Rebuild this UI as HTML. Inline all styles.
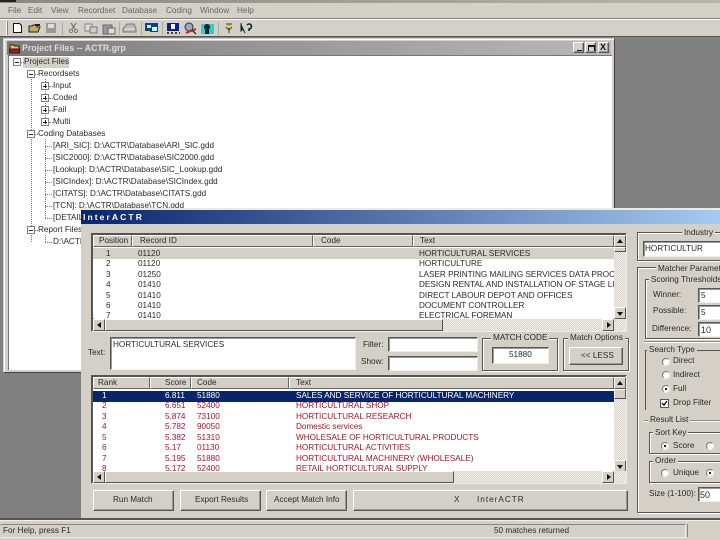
<!DOCTYPE html>
<html><head><meta charset="utf-8"><style>
html,body{margin:0;padding:0;background:#808080}
#p{position:relative;width:720px;height:540px;overflow:hidden;background:#808080;font-family:"Liberation Sans",sans-serif;font-size:8.2px;color:#2a2a2a}
#p div,#p span,#p svg{position:absolute;box-sizing:border-box}
.t{white-space:nowrap;line-height:10px;height:10px;filter:blur(.35px)}
.m{color:#666;font-size:8.2px}
.r{background:#d4d0c8;border:1px solid;border-color:#fff #555 #555 #fff;box-shadow:inset -1px -1px 0 #999}
.s{background:#fff;border:1px solid;border-color:#555 #eee #eee #555;box-shadow:inset 1px 1px 0 #999}
.g{border:1px solid #555;box-shadow:1px 1px 0 #fff,inset 1px 1px 0 #fff}
.l{background:#d4d0c8;white-space:nowrap;line-height:10px;height:10px;padding:0 2px;filter:blur(.35px)}
.h{background:#d4d0c8;border:1px solid;border-color:#fff #666 #666 #fff;height:12px}
.b{background:#d4d0c8;border:1px solid;border-color:#fff #555 #555 #fff;width:12px;height:12px}
.d{background:repeating-conic-gradient(#d4d0c8 0 25%,#f4f3ef 0 50%) 0 0/2px 2px}
.rd{width:8px;height:8px;border-radius:50%;background:#fff;border:1px solid;border-color:#777 #eee #eee #777}
.on:after{content:"";position:absolute;left:2px;top:2px;width:2px;height:2px;background:#222}
.red{color:#a31525}
.bx{width:8px;height:8px;background:#fff;border:1px solid #808080;font-size:0}
.bx:before{content:"";position:absolute;left:1px;right:1px;top:2.5px;height:1px;background:#222}
.pl:after{content:"";position:absolute;top:1px;bottom:1px;left:2.5px;width:1px;background:#222}
.v{border-left:1px dotted #777;width:1px}
.o{border-top:1px dotted #777;height:1px}
</style></head><body><div id="p">

<!-- app chrome -->
<div style="left:0;top:0;width:720px;height:3px;background:linear-gradient(90deg,#8a8a85,#b5b5b0)"></div>
<div style="left:0;top:0;width:16px;height:2px;background:#222"></div>
<div style="left:0;top:3px;width:720px;height:34px;background:#d4d0c8"></div>
<div style="left:0;top:18px;width:720px;height:1px;background:#808080"></div>
<div style="left:0;top:19px;width:720px;height:1px;background:#fff"></div>
<div style="left:0;top:36px;width:720px;height:1px;background:#555"></div>
<span class="t m" style="left:8px;top:6px">File</span>
<span class="t m" style="left:28px;top:6px">Edit</span>
<span class="t m" style="left:51px;top:6px">View</span>
<span class="t m" style="left:78px;top:6px">Recordset</span>
<span class="t m" style="left:122px;top:6px">Database</span>
<span class="t m" style="left:166px;top:6px">Coding</span>
<span class="t m" style="left:200px;top:6px">Window</span>
<span class="t m" style="left:237px;top:6px">Help</span>
<div style="left:6px;top:21px;width:2px;height:14px;border-left:1px solid #fff;border-right:1px solid #808080"></div>

<!-- toolbar icons -->
<svg style="left:0;top:19px" width="260" height="18" viewBox="0 19 260 18">
<path d="M13.5 23.5h6l2 2v7h-8z" fill="#fff" stroke="#111"/>
<path d="M29 32v-6h3l1-1h4v2h3l-2 5z" fill="#b8b060" stroke="#222"/><path d="M35 24h5v2h-5z" fill="#222"/>
<rect x="46" y="23" width="10" height="10" fill="#999"/><rect x="48" y="24" width="6" height="4" fill="#ddd"/>
<path d="M62.5 22v13M119.5 22v13M141.5 22v13M162.5 22v13M218.5 22v13" stroke="#aaa"/>
<path d="M71 23l4 6M76 23l-4 6" stroke="#777" stroke-width="1.2"/><circle cx="71" cy="31" r="1.6" fill="none" stroke="#777"/><circle cx="76" cy="31" r="1.6" fill="none" stroke="#777"/>
<rect x="85" y="24" width="7" height="7" fill="#ddd" stroke="#888"/><rect x="90" y="27" width="7" height="6" fill="#ccc" stroke="#777"/>
<rect x="103" y="25" width="9" height="9" fill="#999" stroke="#666"/><rect x="108" y="28" width="7" height="6" fill="#ddd" stroke="#666"/>
<path d="M123 29l4-5h7l2 4v4h-13z" fill="#bbb" stroke="#777"/><path d="M125 29h9" stroke="#eee"/>
<rect x="145" y="23" width="13" height="9" fill="#123a9a"/><rect x="147" y="25" width="4" height="3" fill="#9fd"/><rect x="152" y="27" width="5" height="4" fill="#cff"/><rect x="145" y="31" width="5" height="3" fill="#dd8"/>
<rect x="167" y="23" width="12" height="8" fill="#10208a"/><rect x="171" y="24" width="4" height="5" fill="#fff"/><path d="M167 33h2M171 33h2M175 33h2M179 33h1" stroke="#111" stroke-width="1.5"/>
<circle cx="189" cy="27" r="4" fill="#9ab" stroke="#234"/><path d="M186 33l10-4" stroke="#c22" stroke-width="2"/><path d="M192 30l4 4" stroke="#333" stroke-width="1.5"/>
<rect x="201" y="24" width="13" height="10" fill="#3cc"/><circle cx="207" cy="27" r="3" fill="#123"/><rect x="205" y="29" width="4" height="5" fill="#123"/>
<path d="M226 24h6M229 24v9M226 27l3 3 3-3" fill="none" stroke="#555" stroke-width="1.3"/><path d="M227 25h4v3h-4z" fill="#dc4"/>
<path d="M241 23v8l2-2 2 4" fill="#123" stroke="#123"/><path d="M247 25a2.5 2.5 0 1 1 2 4v2" fill="none" stroke="#123" stroke-width="1.6"/>
</svg>

<!-- MDI left edge -->
<div style="left:0;top:37px;width:3px;height:483px;background:#808080"></div>

<!-- Project window -->
<div style="left:3px;top:38px;width:612px;height:335px;background:#d4d0c8;border:1px solid;border-color:#d4d0c8 #444 #444 #d4d0c8;box-shadow:inset 1px 1px 0 #fff"></div>
<div style="left:7px;top:41px;width:604px;height:14px;background:linear-gradient(90deg,#7d7d7d,#b8b8b8)"></div>
<svg style="left:9px;top:42px" width="12" height="12"><path d="M1 3h4l1 1h4v4H1z" fill="#dfc25a" stroke="#222"/><rect x="0.5" y="7" width="10" height="4" fill="#b01818" stroke="#222"/></svg>
<span class="t" style="left:22px;top:43px;color:#dcdcdc;font-weight:bold;font-size:8.8px">Project Files -- ACTR.grp</span>
<div class="r" style="left:573px;top:42px;width:11px;height:11px"><div style="left:3px;top:7px;width:5px;height:1px;background:#111"></div></div>
<div class="r" style="left:585px;top:42px;width:11px;height:11px"><div style="left:2px;top:2px;width:7px;height:6px;border:1px solid #111;border-top-width:2px;border-bottom:0"></div></div>
<div class="r" style="left:598px;top:42px;width:11px;height:11px"><span style="left:1px;top:-1px;font-size:9px;line-height:10px;font-weight:bold;color:#111">X</span></div>
<div style="left:8px;top:55px;width:604px;height:315px;background:#fff;border-top:1px solid #777;border-left:1px solid #777"></div>

<!-- tree -->
<div style="left:23px;top:57px;width:46px;height:11px;background:#d4d0c8"></div>
<div class="v" style="left:31px;top:79px;height:163px"></div>
<div class="v" style="left:45px;top:79px;height:43px"></div>
<div class="v" style="left:45px;top:139px;height:79px"></div>
<div class="v" style="left:45px;top:235px;height:7px"></div>
<div class="o" style="left:21px;top:62px;width:3px"></div>
<div class="o" style="left:35px;top:74px;width:3px"></div>
<div class="o" style="left:49px;top:86px;width:4px"></div><div class="o" style="left:49px;top:98px;width:4px"></div><div class="o" style="left:49px;top:110px;width:4px"></div><div class="o" style="left:49px;top:122px;width:4px"></div>
<div class="o" style="left:35px;top:134px;width:3px"></div><div class="o" style="left:35px;top:230px;width:3px"></div>
<div class="o" style="left:45px;top:146px;width:7px"></div><div class="o" style="left:45px;top:158px;width:7px"></div><div class="o" style="left:45px;top:170px;width:7px"></div><div class="o" style="left:45px;top:182px;width:7px"></div><div class="o" style="left:45px;top:194px;width:7px"></div><div class="o" style="left:45px;top:206px;width:7px"></div><div class="o" style="left:45px;top:218px;width:7px"></div><div class="o" style="left:45px;top:242px;width:7px"></div>
<div class="bx" style="left:13px;top:58px"></div>
<div class="bx" style="left:27px;top:70px"></div>
<div class="bx pl" style="left:41px;top:82px"></div>
<div class="bx pl" style="left:41px;top:94px"></div>
<div class="bx pl" style="left:41px;top:106px"></div>
<div class="bx pl" style="left:41px;top:118px"></div>
<div class="bx" style="left:27px;top:130px"></div>
<div class="bx" style="left:27px;top:226px"></div>
<span class="t" style="left:24px;top:57px">Project Files</span>
<span class="t" style="left:38px;top:69px">Recordsets</span>
<span class="t" style="left:53px;top:81px">Input</span>
<span class="t" style="left:53px;top:93px">Coded</span>
<span class="t" style="left:53px;top:105px">Fail</span>
<span class="t" style="left:53px;top:117px">Multi</span>
<span class="t" style="left:38px;top:129px">Coding Databases</span>
<span class="t" style="left:53px;top:141px">[ARI_SIC]:  D:\ACTR\Database\ARI_SIC.gdd</span>
<span class="t" style="left:53px;top:153px">[SIC2000]:  D:\ACTR\Database\SIC2000.gdd</span>
<span class="t" style="left:53px;top:165px">[Lookup]:  D:\ACTR\Database\SIC_Lookup.gdd</span>
<span class="t" style="left:53px;top:177px">[SICIndex]:  D:\ACTR\Database\SICIndex.gdd</span>
<span class="t" style="left:53px;top:189px">[CITATS]:  D:\ACTR\Database\CITATS.gdd</span>
<span class="t" style="left:53px;top:201px">[TCN]:  D:\ACTR\Database\TCN.gdd</span>
<span class="t" style="left:53px;top:213px">[DETAIL]</span>
<span class="t" style="left:38px;top:225px">Report Files</span>
<span class="t" style="left:53px;top:237px">D:\ACTR</span>

<!-- InterACTR window -->
<div style="left:81px;top:208px;width:639px;height:310px;background:#d4d0c8"></div>
<div style="left:81px;top:208px;width:639px;height:2px;background:#eceae4"></div>
<div style="left:81px;top:210px;width:639px;height:14px;background:linear-gradient(90deg,#0a246a,#a6caf0)"></div>
<span class="t" style="left:83px;top:212px;color:#fff;font-weight:bold;font-size:8.5px;letter-spacing:2.1px">InterACTR</span>

<!-- top list -->
<div class="s" style="left:91px;top:233px;width:536px;height:99px;border-width:2px"></div>
<div style="left:93px;top:235px;width:521px;height:83px;background:#fff;overflow:hidden"></div>
<div class="h" style="left:93px;top:235px;width:39px"></div>
<div class="h" style="left:132px;top:235px;width:181px"></div>
<div class="h" style="left:313px;top:235px;width:100px"></div>
<div class="h" style="left:413px;top:235px;width:201px"></div>
<span class="t" style="left:99px;top:236px">Position</span>
<span class="t" style="left:140px;top:236px">Record ID</span>
<span class="t" style="left:321px;top:236px">Code</span>
<span class="t" style="left:420px;top:236px">Text</span>
<div style="left:93px;top:248px;width:521px;height:11px;background:#d4d0c8"></div>
<div style="left:93px;top:247px;width:521px;height:71px;overflow:hidden">
<span class="t" style="left:13px;top:2px">1</span><span class="t" style="left:45px;top:2px">01120</span><span class="t" style="left:326px;top:2px">HORTICULTURAL SERVICES</span>
<span class="t" style="left:13px;top:12px">2</span><span class="t" style="left:45px;top:12px">01120</span><span class="t" style="left:326px;top:12px">HORTICULTURE</span>
<span class="t" style="left:13px;top:23px">3</span><span class="t" style="left:45px;top:23px">01250</span><span class="t" style="left:326px;top:23px;width:195px;overflow:hidden">LASER PRINTING MAILING SERVICES DATA PROCESSING</span>
<span class="t" style="left:13px;top:33px">4</span><span class="t" style="left:45px;top:33px">01410</span><span class="t" style="left:326px;top:33px;width:195px;overflow:hidden">DESIGN RENTAL AND INSTALLATION OF STAGE LIGHTING</span>
<span class="t" style="left:13px;top:44px">5</span><span class="t" style="left:45px;top:44px">01410</span><span class="t" style="left:326px;top:44px">DIRECT LABOUR DEPOT AND OFFICES</span>
<span class="t" style="left:13px;top:54px">6</span><span class="t" style="left:45px;top:54px">01410</span><span class="t" style="left:326px;top:54px">DOCUMENT CONTROLLER</span>
<span class="t" style="left:13px;top:64px">7</span><span class="t" style="left:45px;top:64px">01410</span><span class="t" style="left:326px;top:64px">ELECTRICAL FOREMAN</span>
</div>
<div class="d" style="left:614px;top:235px;width:12px;height:84px"></div>
<div class="b" style="left:614px;top:235px"><span style="left:2px;top:3px;width:0;height:0;border:3px solid transparent;border-top:0;border-bottom:4px solid #111"></span></div>
<div class="b" style="left:614px;top:247px;height:5px"></div>
<div class="b" style="left:614px;top:307px"><span style="left:2px;top:4px;width:0;height:0;border:3px solid transparent;border-bottom:0;border-top:4px solid #111"></span></div>
<div class="d" style="left:93px;top:319px;width:533px;height:12px"></div>
<div class="b" style="left:93px;top:319px"><span style="left:3px;top:2px;width:0;height:0;border:3px solid transparent;border-left:0;border-right:4px solid #111"></span></div>
<div class="b" style="left:105px;top:319px;width:338px"></div>
<div class="b" style="left:602px;top:319px"><span style="left:4px;top:2px;width:0;height:0;border:3px solid transparent;border-right:0;border-left:4px solid #111"></span></div>

<!-- text + filter -->
<span class="t" style="left:88px;top:348px">Text:</span>
<div class="s" style="left:110px;top:337px;width:246px;height:33px"></div>
<span class="t" style="left:113px;top:340px">HORTICULTURAL SERVICES</span>
<span class="t" style="left:363px;top:340px">Filter:</span>
<span class="t" style="left:361px;top:357px">Show:</span>
<div class="s" style="left:388px;top:337px;width:90px;height:15px"></div>
<div class="s" style="left:388px;top:356px;width:90px;height:15px"></div>

<div class="g" style="left:482px;top:338px;width:76px;height:33px"></div>
<span class="l" style="left:491px;top:333px">MATCH CODE</span>
<div class="s" style="left:492px;top:347px;width:57px;height:17px"></div>
<span class="t" style="left:509px;top:350px">51880</span>
<div class="g" style="left:563px;top:338px;width:66px;height:33px"></div>
<span class="l" style="left:568px;top:333px">Match Options</span>
<div class="r" style="left:569px;top:347px;width:54px;height:18px"></div>
<span class="t" style="left:581px;top:351px">&lt;&lt; LESS</span>

<!-- lower list -->
<div class="s" style="left:91px;top:375px;width:536px;height:109px;border-width:2px"></div>
<div style="left:93px;top:377px;width:521px;height:94px;background:#fff"></div>
<div class="h" style="left:93px;top:377px;width:57px"></div>
<div class="h" style="left:150px;top:377px;width:41px"></div>
<div class="h" style="left:191px;top:377px;width:98px"></div>
<div class="h" style="left:289px;top:377px;width:325px"></div>
<span class="t" style="left:98px;top:378px">Rank</span>
<span class="t" style="left:165px;top:378px">Score</span>
<span class="t" style="left:197px;top:378px">Code</span>
<span class="t" style="left:296px;top:378px">Text</span>
<div style="left:93px;top:391px;width:521px;height:11px;background:#0a246a"></div>
<div style="left:93px;top:389px;width:521px;height:82px;overflow:hidden" class="red">
<span class="t" style="left:9px;top:2px;color:#fff">1</span><span class="t" style="left:72px;top:2px;color:#fff">6.811</span><span class="t" style="left:104px;top:2px;color:#fff">51880</span><span class="t" style="left:203px;top:2px;color:#fff">SALES AND SERVICE OF HORTICULTURAL MACHINERY</span>
<span class="t" style="left:9px;top:12px">2</span><span class="t" style="left:72px;top:12px">6.651</span><span class="t" style="left:104px;top:12px">52400</span><span class="t" style="left:203px;top:12px">HORTICULTURAL SHOP</span>
<span class="t" style="left:9px;top:23px">3</span><span class="t" style="left:72px;top:23px">5.874</span><span class="t" style="left:104px;top:23px">73100</span><span class="t" style="left:203px;top:23px">HORTICULTURAL RESEARCH</span>
<span class="t" style="left:9px;top:33px">4</span><span class="t" style="left:72px;top:33px">5.782</span><span class="t" style="left:104px;top:33px">90050</span><span class="t" style="left:203px;top:33px">Domestic services</span>
<span class="t" style="left:9px;top:44px">5</span><span class="t" style="left:72px;top:44px">5.382</span><span class="t" style="left:104px;top:44px">51310</span><span class="t" style="left:203px;top:44px">WHOLESALE OF HORTICULTURAL PRODUCTS</span>
<span class="t" style="left:9px;top:54px">6</span><span class="t" style="left:72px;top:54px">5.17</span><span class="t" style="left:104px;top:54px">01130</span><span class="t" style="left:203px;top:54px">HORTICULTURAL ACTIVITIES</span>
<span class="t" style="left:9px;top:65px">7</span><span class="t" style="left:72px;top:65px">5.195</span><span class="t" style="left:104px;top:65px">51880</span><span class="t" style="left:203px;top:65px">HORTICULTURAL MACHINERY (WHOLESALE)</span>
<span class="t" style="left:9px;top:75px">8</span><span class="t" style="left:72px;top:75px">5.172</span><span class="t" style="left:104px;top:75px">52400</span><span class="t" style="left:203px;top:75px">RETAIL HORTICULTURAL SUPPLY</span>
</div>
<div class="d" style="left:614px;top:377px;width:12px;height:95px"></div>
<div class="b" style="left:614px;top:377px"><span style="left:2px;top:3px;width:0;height:0;border:3px solid transparent;border-top:0;border-bottom:4px solid #111"></span></div>
<div class="b" style="left:614px;top:389px;height:10px"></div>
<div class="b" style="left:614px;top:460px"><span style="left:2px;top:4px;width:0;height:0;border:3px solid transparent;border-bottom:0;border-top:4px solid #111"></span></div>
<div class="d" style="left:93px;top:471px;width:533px;height:12px"></div>
<div class="b" style="left:93px;top:471px"><span style="left:3px;top:2px;width:0;height:0;border:3px solid transparent;border-left:0;border-right:4px solid #111"></span></div>
<div class="b" style="left:105px;top:471px;width:349px"></div>
<div class="b" style="left:602px;top:471px"><span style="left:4px;top:2px;width:0;height:0;border:3px solid transparent;border-right:0;border-left:4px solid #111"></span></div>

<!-- buttons -->
<div class="r" style="left:93px;top:490px;width:81px;height:21px"></div>
<div class="r" style="left:180px;top:490px;width:81px;height:21px"></div>
<div class="r" style="left:266px;top:490px;width:81px;height:21px"></div>
<div class="r" style="left:353px;top:490px;width:275px;height:21px"></div>
<span class="t" style="left:113px;top:495px">Run Match</span>
<span class="t" style="left:195px;top:495px">Export Results</span>
<span class="t" style="left:274px;top:495px">Accept Match Info</span>
<span class="t" style="left:454px;top:495px">X</span>
<span class="t" style="left:477px;top:495px;letter-spacing:1px">InterACTR</span>

<!-- right panel -->
<div class="g" style="left:637px;top:232px;width:90px;height:29px"></div>
<span class="l" style="left:682px;top:228px">Industry</span>
<div class="s" style="left:643px;top:241px;width:80px;height:16px"></div>
<span class="t" style="left:645px;top:244px">HORTICULTUR</span>

<div class="g" style="left:637px;top:267px;width:90px;height:246px"></div>
<span class="l" style="left:656px;top:264px">Matcher Parameters</span>
<div class="g" style="left:645px;top:279px;width:80px;height:60px"></div>
<span class="l" style="left:649px;top:275px">Scoring Thresholds</span>
<span class="t" style="left:653px;top:290px">Winner:</span>
<span class="t" style="left:653px;top:306px">Possible:</span>
<span class="t" style="left:652px;top:324px">Difference:</span>
<div class="s" style="left:698px;top:288px;width:28px;height:15px"></div>
<div class="s" style="left:698px;top:305px;width:28px;height:15px"></div>
<div class="s" style="left:698px;top:322px;width:28px;height:15px"></div>
<span class="t" style="left:701px;top:291px">5</span>
<span class="t" style="left:701px;top:308px">5</span>
<span class="t" style="left:701px;top:325px;font-size:9px">10</span>

<div style="left:644px;top:341px;width:76px;height:1px;background:#888;box-shadow:0 1px 0 #fff"></div>
<div style="left:645px;top:350px;width:1px;height:60px;background:#555"></div>
<div style="left:645px;top:350px;width:80px;height:1px;background:#555"></div>
<span class="l" style="left:647px;top:345px">Search Type</span>
<div class="rd" style="left:662px;top:358px"></div><span class="t" style="left:673px;top:356px">Direct</span>
<div class="rd" style="left:662px;top:371px"></div><span class="t" style="left:673px;top:370px">Indirect</span>
<div class="rd on" style="left:662px;top:385px"></div><span class="t" style="left:673px;top:384px">Full</span>
<div style="left:660px;top:399px;width:9px;height:9px;background:#fff;border:1px solid #555"><svg style="left:0;top:0" width="7" height="7"><path d="M1 3l2 2 3-4" fill="none" stroke="#111" stroke-width="1.4"/></svg></div>
<span class="t" style="left:673px;top:398px">Drop Filter</span>

<div style="left:644px;top:420px;width:76px;height:1px;background:#888;box-shadow:0 1px 0 #fff"></div>
<span class="l" style="left:648px;top:415px">Result List</span>
<div class="g" style="left:649px;top:432px;width:80px;height:22px"></div>
<span class="l" style="left:653px;top:428px">Sort Key</span>
<div class="rd on" style="left:661px;top:442px"></div><span class="t" style="left:673px;top:441px">Score</span>
<div class="rd" style="left:706px;top:442px"></div>
<div class="g" style="left:649px;top:461px;width:80px;height:22px"></div>
<span class="l" style="left:653px;top:456px">Order</span>
<div class="rd" style="left:661px;top:469px"></div><span class="t" style="left:673px;top:468px">Unique</span>
<div class="rd on" style="left:706px;top:469px"></div>
<span class="t" style="left:649px;top:489px">Size (1-100):</span>
<div class="s" style="left:698px;top:487px;width:28px;height:15px"></div>
<span class="t" style="left:700px;top:490px;font-size:9px">50</span>

<!-- status bar -->
<div style="left:0;top:518px;width:720px;height:22px;background:#d4d0c8;border-top:2px solid #555"></div>
<div style="left:0;top:520px;width:720px;height:1px;background:#eee"></div>
<div style="left:0;top:524px;width:686px;height:14px;border:1px solid;border-color:#888 #eee #eee transparent"></div>
<div style="left:687px;top:524px;width:1px;height:13px;background:#888"></div>
<span class="t" style="left:3px;top:526px">For Help, press F1</span>
<span class="t" style="left:494px;top:526px">50 matches returned</span>
</div></body></html>
